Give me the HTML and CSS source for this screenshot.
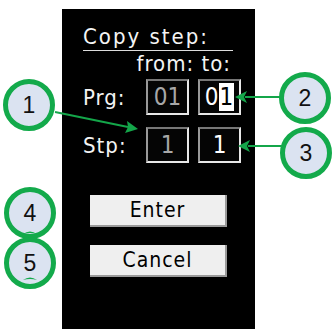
FILE: index.html
```html
<!DOCTYPE html>
<html lang="en">
<head>
  <meta charset="UTF-8" />
  <meta name="viewport" content="width=device-width, initial-scale=1" />
  <title>Copy step</title>
  <link rel="stylesheet" href="styles.css">
</head>
<body>
  <div class="screen">
    <div class="title">Copy step:</div>
    <div class="cols">from: to:</div>

    <div class="fields">
      <div class="label">Prg:</div>
      <div class="box dim">01</div>
      <div class="box lit">0<span class="cursor">1</span></div>

      <div class="label">Stp:</div>
      <div class="box dim">1</div>
      <div class="box lit">1</div>
    </div>

    <div class="buttons">
      <button class="btn">Enter</button>
      <button class="btn">Cancel</button>
    </div>
  </div>

  <!-- callouts -->
  <svg class="callouts" width="335" height="329" viewBox="0 0 335 329">
    <g class="arrow">
      <line x1="55" y1="112" x2="128" y2="127" />
      <polygon points="138,129 125,133 128,127 127,121" />
      <line x1="281" y1="97" x2="245" y2="97" />
      <polygon points="235,97 247,91 244,97 247,103" />
      <line x1="284" y1="146" x2="248" y2="146" />
      <polygon points="238,146 250,140 247,146 250,152" />
    </g>
    <g class="bubble">
      <circle cx="29" cy="105" r="23.5" />
      <circle cx="305" cy="98" r="23.5" />
      <circle cx="306" cy="153" r="23.5" />
      <circle cx="30" cy="213" r="23.5" />
      <circle cx="30" cy="263" r="23.5" />
    </g>
    <g class="num">
      <text x="29" y="113">1</text>
      <text x="305" y="106">2</text>
      <text x="306" y="161">3</text>
      <text x="30" y="221">4</text>
      <text x="30" y="271">5</text>
    </g>
    <g class="smile">
      <path d="M23 234 Q30 229 37 234 Q30 232 23 234 Z" />
      <path d="M23 280 Q30 275 37 280 Q30 278 23 280 Z" />
    </g>
  </svg>
</body>
</html>
```

FILE: styles.css
```css
body {
  margin: 0;
  background: #fff;
  font-family: "DejaVu Sans Condensed", "DejaVu Sans", sans-serif;
}
.screen {
  margin: 9px 0 0 62px;
  width: 193px;
  height: 320px;
  background: #000;
  color: #f4f4f4;
  padding: 0 0 0 21px;
  box-sizing: border-box;
}
.title {
  width: 150px;
  padding-top: 15px;
  padding-bottom: 1px;
  font-size: 22px;
  letter-spacing: 2px;
  line-height: 25px;
  border-bottom: 1px solid #ddd;
}
.cols {
  width: 148px;
  text-align: right;
  font-size: 22px;
  letter-spacing: 1px;
  line-height: 24px;
  margin-top: 1px;
}
.fields {
  display: grid;
  grid-template-columns: 54px 43px 43px;
  grid-auto-rows: 36px;
  column-gap: 9px;
  row-gap: 12px;
  margin-top: 3px;
}
.label {
  font-size: 22px;
  letter-spacing: 1px;
  display: flex;
  align-items: center;
}
.box {
  box-sizing: border-box;
  border: 2px solid;
  border-color: #777 #e8e8e8 #e8e8e8 #999;
  background: #050505;
  font-size: 24px;
  display: flex;
  align-items: center;
  justify-content: center;
}
.dim {
  color: #a8a8a8;
}
.lit {
  color: #fff;
}
.cursor {
  background: #fff;
  color: #000;
  padding: 0 1px;
}
.buttons {
  display: flex;
  flex-direction: column;
  gap: 18px;
  margin: 32px 0 0 7px;
}
.btn {
  width: 137px;
  height: 32px;
  padding: 0;
  border: none;
  border-right: 2px solid #9a9a9a;
  border-bottom: 2px solid #9a9a9a;
  background: #efefef;
  color: #000;
  font-family: "DejaVu Sans Condensed", "DejaVu Sans", sans-serif;
  font-size: 21px;
  letter-spacing: 1px;
}
.callouts {
  position: absolute;
  left: 0;
  top: 0;
}
.arrow line {
  stroke: #14a64a;
  stroke-width: 2;
}
.arrow polygon {
  fill: #14a64a;
}
.bubble circle {
  fill: #dbe3f1;
  stroke: #13aa4b;
  stroke-width: 5;
}
.num text {
  font-family: "Liberation Sans", Arial, sans-serif;
  font-size: 23px;
  fill: #111;
  text-anchor: middle;
}
.smile path {
  fill: #13aa4b;
}
```
